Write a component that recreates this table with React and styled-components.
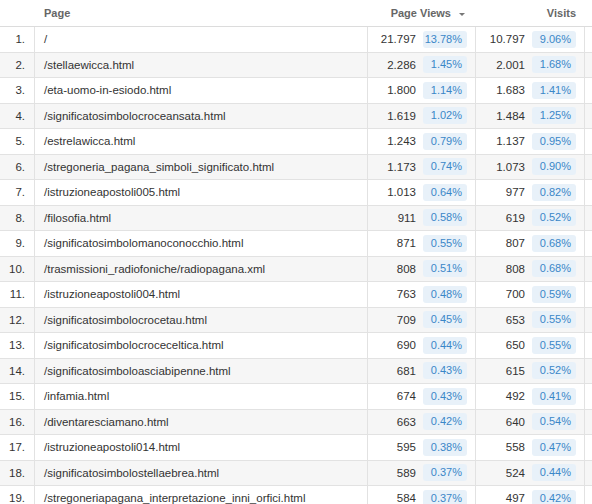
import React from "react";
import styled, { createGlobalStyle } from "styled-components";

const GlobalStyle = createGlobalStyle`
  body {
    margin: 0;
    background: #fff;
    font-family: "Liberation Sans", Arial, sans-serif;
  }
`;

const rows = [
  ["/", "21.797", "13.78%", "10.797", "9.06%"],
  ["/stellaewicca.html", "2.286", "1.45%", "2.001", "1.68%"],
  ["/eta-uomo-in-esiodo.html", "1.800", "1.14%", "1.683", "1.41%"],
  ["/significatosimbolocroceansata.html", "1.619", "1.02%", "1.484", "1.25%"],
  ["/estrelawicca.html", "1.243", "0.79%", "1.137", "0.95%"],
  ["/stregoneria_pagana_simboli_significato.html", "1.173", "0.74%", "1.073", "0.90%"],
  ["/istruzioneapostoli005.html", "1.013", "0.64%", "977", "0.82%"],
  ["/filosofia.html", "911", "0.58%", "619", "0.52%"],
  ["/significatosimbolomanoconocchio.html", "871", "0.55%", "807", "0.68%"],
  ["/trasmissioni_radiofoniche/radiopagana.xml", "808", "0.51%", "808", "0.68%"],
  ["/istruzioneapostoli004.html", "763", "0.48%", "700", "0.59%"],
  ["/significatosimbolocrocetau.html", "709", "0.45%", "653", "0.55%"],
  ["/significatosimbolocroceceltica.html", "690", "0.44%", "650", "0.55%"],
  ["/significatosimboloasciabipenne.html", "681", "0.43%", "615", "0.52%"],
  ["/infamia.html", "674", "0.43%", "492", "0.41%"],
  ["/diventaresciamano.html", "663", "0.42%", "640", "0.54%"],
  ["/istruzioneapostoli014.html", "595", "0.38%", "558", "0.47%"],
  ["/significatosimbolostellaebrea.html", "589", "0.37%", "524", "0.44%"],
  ["/stregoneriapagana_interpretazione_inni_orfici.html", "584", "0.37%", "497", "0.42%"],
];

const Table = styled.div`
  width: 592px;
  font-size: 11.5px;
  color: #333;
`;

const HeaderRow = styled.div`
  display: grid;
  grid-template-columns: 34px 333px 108px 109px 8px;
  height: 26px;
  border-bottom: 1px solid #dcdcdc;
  align-items: center;
`;

const HeadCell = styled.div`
  font-size: 11px;
  font-weight: bold;
  color: #666;
  text-align: ${(p) => (p.$right ? "right" : "left")};
  padding: ${(p) => (p.$right ? "0 8px 0 0" : "0 0 0 10px")};
  white-space: nowrap;
`;

const Arrow = styled.span`
  display: inline-block;
  margin-left: 8px;
  margin-right: 2px;
  width: 0;
  height: 0;
  border-left: 3px solid transparent;
  border-right: 3px solid transparent;
  border-top: 3px solid #777;
  vertical-align: middle;
`;

const Row = styled.div`
  display: grid;
  grid-template-columns: 34px 333px 108px 109px 8px;
  height: 24.5px;
  border-bottom: 1px solid #e2e2e2;
  background: ${(p) => (p.$alt ? "#f6f6f6" : "#fff")};
`;

const Cell = styled.div`
  display: flex;
  align-items: center;
  justify-content: ${(p) => (p.$right ? "flex-end" : "flex-start")};
  border-left: ${(p) => (p.$first ? "none" : "1px solid #e2e2e2")};
  padding: ${(p) => (p.$first ? "0 9px 0 0" : p.$right ? "0 8px 0 0" : "0 0 0 9px")};
  white-space: nowrap;
  overflow: hidden;
`;

const Value = styled.span`
  margin-right: 7px;
`;

const Badge = styled.span`
  display: inline-block;
  width: 44px;
  height: 17px;
  line-height: 17px;
  box-sizing: border-box;
  padding-right: 5px;
  text-align: right;
  font-size: 11px;
  color: #3a87c8;
  background: #e8f1f9;
  border-radius: 3px;
`;

export default function App() {
  return (
    <>
      <GlobalStyle />
      <Table>
        <HeaderRow>
          <div />
          <HeadCell>Page</HeadCell>
          <HeadCell $right>
            Page Views
            <Arrow />
          </HeadCell>
          <HeadCell $right>Visits</HeadCell>
          <div />
        </HeaderRow>
        {rows.map((r, i) => (
          <Row key={i} $alt={i % 2 === 1}>
            <Cell $first $right>
              {i + 1}.
            </Cell>
            <Cell>{r[0]}</Cell>
            <Cell $right>
              <Value>{r[1]}</Value>
              <Badge>{r[2]}</Badge>
            </Cell>
            <Cell $right>
              <Value>{r[3]}</Value>
              <Badge>{r[4]}</Badge>
            </Cell>
            <Cell />
          </Row>
        ))}
      </Table>
    </>
  );
}
